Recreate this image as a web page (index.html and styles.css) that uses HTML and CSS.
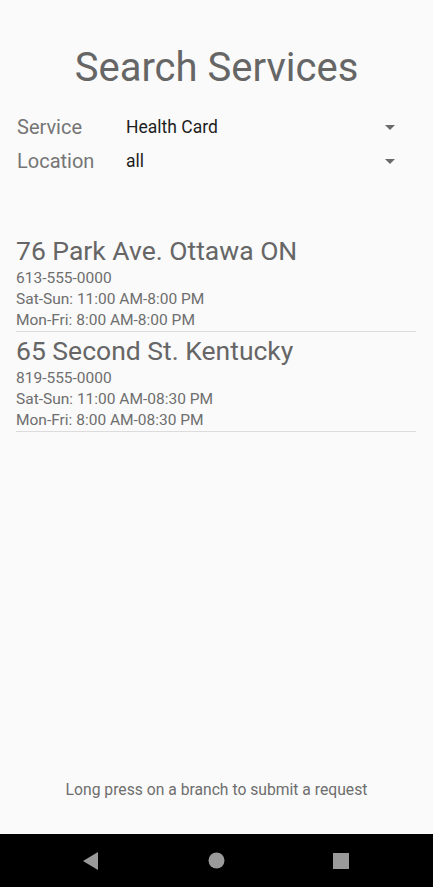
FILE: index.html
```html
<!DOCTYPE html>
<html>
<head>
<meta charset="utf-8">
<link rel="stylesheet" href="styles.css">
</head>
<body>
<div class="screen">
  <main class="content">
    <h1 class="title">Search Services</h1>
    <div class="form">
      <div class="row">
        <span class="label">Service</span>
        <span class="value">Health Card</span>
        <span class="arrow"></span>
      </div>
      <div class="row">
        <span class="label">Location</span>
        <span class="value">all</span>
        <span class="arrow"></span>
      </div>
    </div>
    <ul class="list">
      <li class="item">
        <div class="addr">76 Park Ave. Ottawa ON</div>
        <div class="line">613-555-0000</div>
        <div class="line">Sat-Sun: 11:00 AM-8:00 PM</div>
        <div class="line">Mon-Fri: 8:00 AM-8:00 PM</div>
      </li>
      <li class="item">
        <div class="addr">65 Second St. Kentucky</div>
        <div class="line">819-555-0000</div>
        <div class="line">Sat-Sun: 11:00 AM-08:30 PM</div>
        <div class="line">Mon-Fri: 8:00 AM-08:30 PM</div>
      </li>
    </ul>
  </main>
  <p class="hint">Long press on a branch to submit a request</p>
  <nav class="navbar">
    <svg class="nav-icon" width="16" height="18" viewBox="0 0 16 18"><polygon points="15,0 15,18 0,9" fill="#9a9a9a"/></svg>
    <svg class="nav-icon" width="17" height="17" viewBox="0 0 17 17"><circle cx="8.5" cy="8.5" r="8" fill="#9a9a9a"/></svg>
    <svg class="nav-icon" width="16" height="16" viewBox="0 0 16 16"><rect x="0" y="0" width="16" height="16" fill="#9a9a9a"/></svg>
  </nav>
</div>
</body>
</html>
```

FILE: styles.css
```css
html, body {
  margin: 0;
  padding: 0;
}
body {
  background: #fafafa;
  font-family: Roboto, "Noto Sans", sans-serif;
}
.screen {
  width: 433px;
  height: 887px;
  display: flex;
  flex-direction: column;
  overflow: hidden;
}
.content {
  flex: 1;
  display: flex;
  flex-direction: column;
}
.title {
  margin: 0;
  padding-top: 44px;
  font-size: 40px;
  line-height: 48px;
  font-weight: 400;
  color: #666666;
  text-align: center;
}
.form {
  margin-top: 18px;
  padding: 0 16px 0 16px;
}
.row {
  display: flex;
  align-items: center;
  height: 34px;
}
.label {
  width: 109px;
  padding-left: 1px;
  font-size: 20px;
  color: #757575;
}
.value {
  flex: 1;
  font-size: 17.5px;
  color: #1e1e1e;
}
.arrow {
  width: 0;
  height: 0;
  border-left: 5px solid transparent;
  border-right: 5px solid transparent;
  border-top: 5px solid #6a6a6a;
  margin-right: 22px;
}
.list {
  list-style: none;
  margin: 58px 17px 0 16px;
  padding: 0;
}
.item {
  border-bottom: 1px solid #dcdcdc;
  margin-bottom: 4px;
}
.addr {
  font-size: 26.5px;
  line-height: 30px;
  color: #666666;
  margin-bottom: 2px;
}
.line {
  font-size: 15.5px;
  line-height: 21px;
  color: #6e6e6e;
}
.hint {
  margin: 0;
  padding-bottom: 33px;
  text-align: center;
  font-size: 15.7px;
  line-height: 22px;
  color: #6e6e6e;
}
.navbar {
  height: 53px;
  background: #000;
  display: flex;
  align-items: center;
  justify-content: space-between;
  padding: 0 84px 0 83px;
}
.nav-icon {
  display: block;
}
```
